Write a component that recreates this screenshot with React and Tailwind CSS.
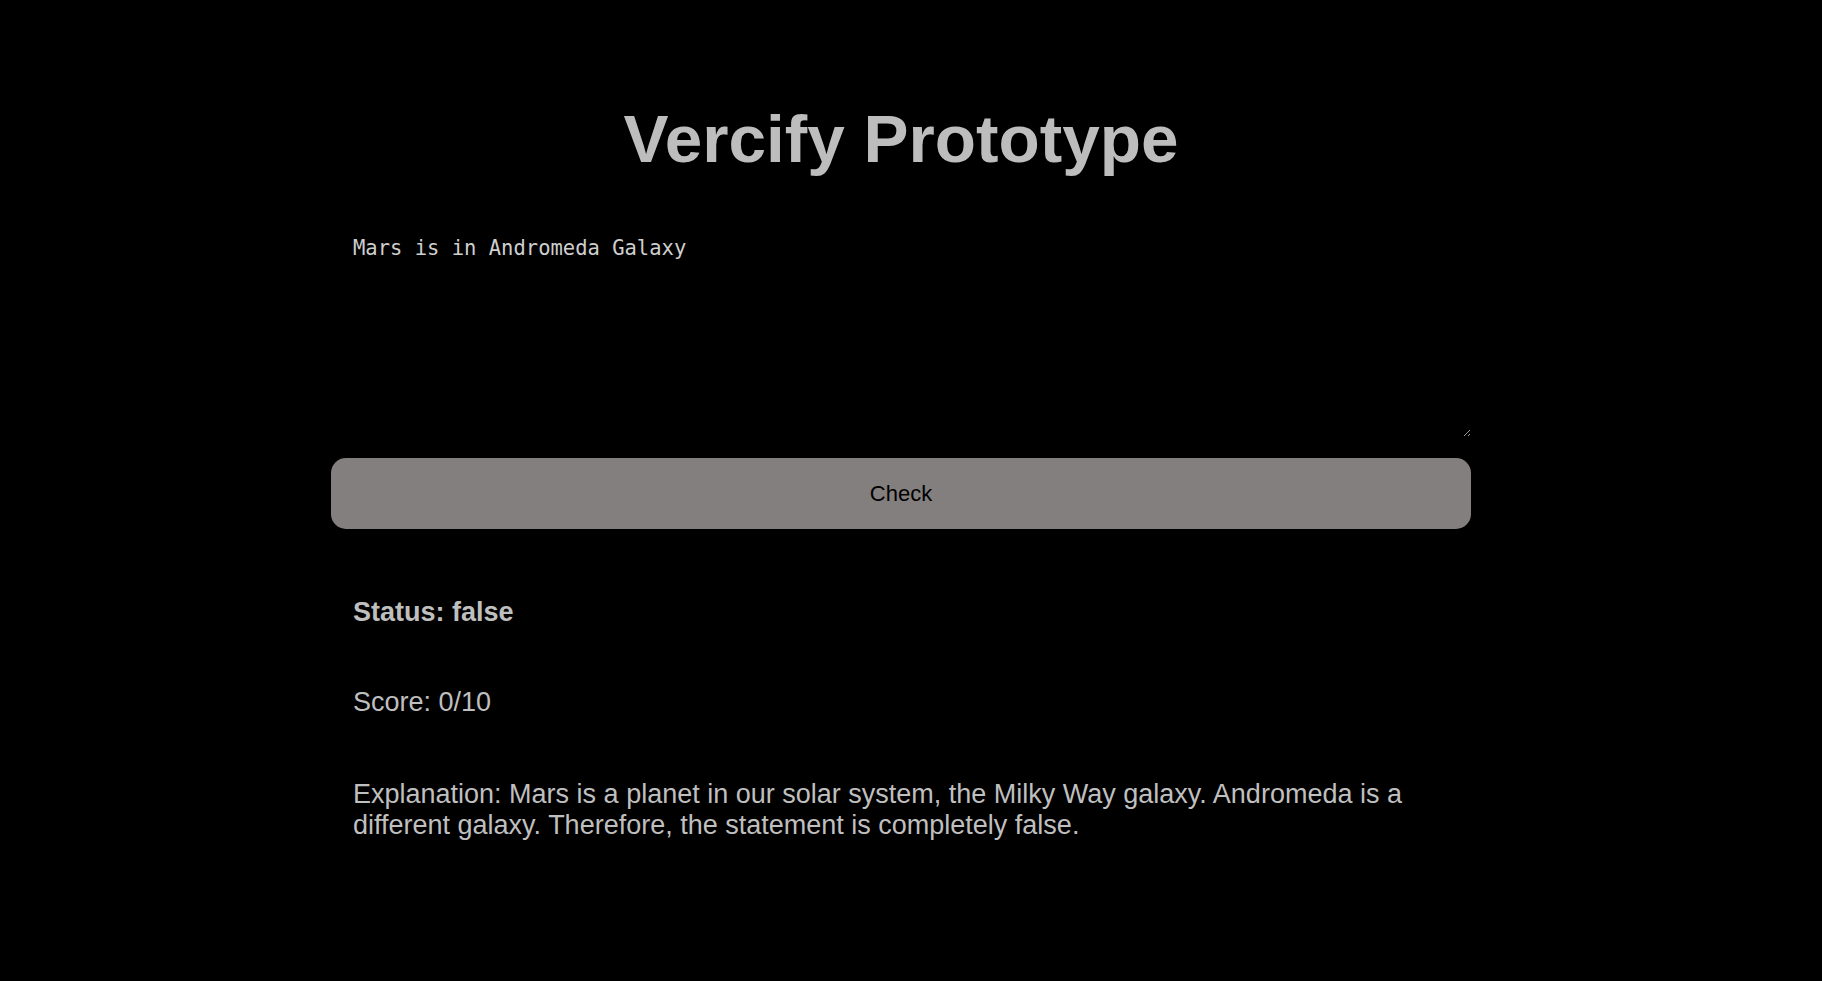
import React, { useState } from 'react';

const App = () => {
  const [claim, setClaim] = useState("Mars is in Andromeda Galaxy");
  const result = {
    status: "false",
    score: 0,
    explanation:
      "Mars is a planet in our solar system, the Milky Way galaxy. Andromeda is a different galaxy. Therefore, the statement is completely false.",
  };

  return (
    <div className="min-h-[981px] bg-black pr-[20px] font-['Liberation_Sans',Arial,sans-serif] text-[#bfbfbf]">
      <div className="mx-auto w-[1140px] pt-[100px] pb-[80px]">
        <h1 className="text-center text-[67.5px] font-bold leading-[77px] text-[#bdbdbd]">
          Vercify Prototype
        </h1>

        <textarea
          value={claim}
          onChange={(e) => setClaim(e.target.value)}
          className="mt-[34px] block h-[226px] w-full resize-y bg-black p-[22px] font-['DejaVu_Sans_Mono',monospace] text-[20.5px] text-[#cfcfcf] outline-none"
        />

        <button className="mt-[21px] block h-[71px] w-full rounded-[15px] bg-[#847f7f] text-[22px] text-black">
          Check
        </button>

        <div className="px-[22px] text-[27px] leading-[31px]">
          <p className="mt-[68px] font-bold">Status: {result.status}</p>
          <p className="mt-[59px]">Score: {result.score}/10</p>
          <p className="mt-[61px]">Explanation: {result.explanation}</p>
        </div>
      </div>
    </div>
  );
};

export default App;
